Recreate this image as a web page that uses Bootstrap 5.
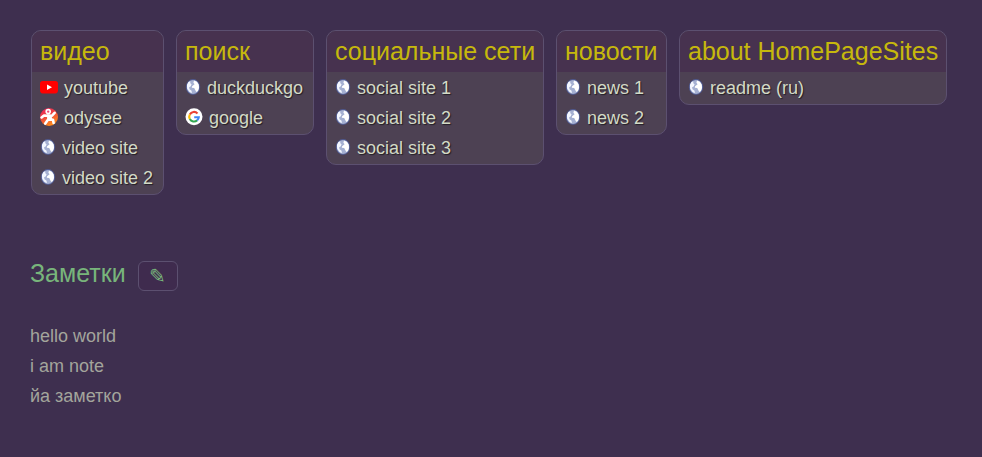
<!DOCTYPE html>
<html lang="ru">
<head>
<meta charset="utf-8">
<title>HomePageSites</title>
<link href="https://cdn.jsdelivr.net/npm/bootstrap@5.3.0/dist/css/bootstrap.min.css" rel="stylesheet">
<style>
body{background:#3e2f4f;font:18px/30px "Liberation Sans",Arial,sans-serif;min-height:457px}
main{padding:30px 30px 0 31px}
.groups{gap:12px;height:231px}
.site-group{border:1px solid #5c5070;border-radius:10px;background:#4d4153;overflow:hidden;padding-bottom:2px}
.site-group h2{height:41px;background:#47324f;color:#c6b80c;font-size:25px;line-height:40px;padding-left:8px;white-space:nowrap}
.site-link{height:30px;padding:2px 0 0 8px;color:#d3dac6;text-shadow:1px 1px 1px rgba(0,0,0,.55);white-space:nowrap;line-height:28px}
.site-link svg{margin:-2px 6px 0 0;flex:none}
.w1{width:133px}.w2{width:138px}.w3{width:218px}.w4{width:111px}.w5{width:268px}
.notes{margin-left:-1px}
.notes h2{color:#78b57b;font-size:25px;line-height:30px;width:96px;margin:-6px 12px 0 0}
.edit-note{width:40px;height:30px;border:1px solid #5c5070;border-radius:6px;background:#3f2b4e;color:#78b57b;font-size:20px;line-height:26px;padding:0 2px 0 0}
.note-text{margin-top:30px;color:#a3a59c}
</style>
<script src="https://cdn.jsdelivr.net/npm/bootstrap@5.3.0/dist/js/bootstrap.bundle.min.js"></script>
</head>
<body>
<svg width="0" height="0" class="position-absolute" aria-hidden="true"><defs>
<symbol id="globe" viewBox="0 0 16 16"><ellipse cx="8" cy="8" rx="7.2" ry="7.9" fill="#5163a6" opacity=".75"/><ellipse cx="8" cy="8" rx="6.2" ry="6.9" fill="#a5b0d2"/><path d="M1.9 6 3.4 3.1 5.2 2.3 5.3 4.2 6.6 5.2 5.6 7.4 4.1 8.3 4.5 10.2 6.6 11.8 6.8 14.3 4.3 12.8 2.2 9.8Z" fill="#f3f6ff"/><path d="M9 1.5 11.9 2.8 13.8 5.8 14 9 12.9 12 11.3 13 10.2 10.9 9.2 9.1 6.8 8.7 7.1 7.3 9.6 5.3 8.4 3.7Z" fill="#fff"/></symbol>
</defs></svg>
<main>
<div class="groups d-flex align-items-start">
<section class="site-group w1"><h2 class="m-0 fw-normal">видео</h2>
<a class="site-link d-flex align-items-center text-decoration-none"><svg width="18" height="18" viewBox="0 0 18 18"><rect y="3" width="18" height="12.4" rx="2.8" fill="#f00"/><path d="m7 6.4 5 2.8-5 2.8Z" fill="#fff"/></svg>youtube</a>
<a class="site-link d-flex align-items-center text-decoration-none"><svg width="18" height="18" viewBox="0 0 18 18"><defs><linearGradient id="odysee" x1="0" y1="0" x2=".5" y2="1"><stop stop-color="#e81e62"/><stop offset=".5" stop-color="#ed453f"/><stop offset="1" stop-color="#ff8a1c"/></linearGradient></defs><circle cx="9" cy="9" r="9" fill="url(#odysee)"/><circle cx="8.2" cy="3.6" r="2" fill="#f24b78" stroke="#fff" stroke-width="1.6"/><path d="M14.6 4.8 12 7.7 9.3 8.2M1.6 9.4 4 7.5l5 .4M5.3 15.6l2.8-4L13 11.7l.6 3.2" fill="none" stroke="#fff" stroke-width="2.6" stroke-linecap="round" stroke-linejoin="round"/><path d="M7 6.5h4l1.8 5.7H7.2Z" fill="#fff"/></svg>odysee</a>
<a class="site-link d-flex align-items-center text-decoration-none"><svg width="16" height="16"><use href="#globe"/></svg>video site</a>
<a class="site-link d-flex align-items-center text-decoration-none"><svg width="16" height="16"><use href="#globe"/></svg>video site 2</a></section>
<section class="site-group w2"><h2 class="m-0 fw-normal">поиск</h2>
<a class="site-link d-flex align-items-center text-decoration-none"><svg width="16" height="16"><use href="#globe"/></svg>duckduckgo</a>
<a class="site-link d-flex align-items-center text-decoration-none"><svg width="18" height="18" viewBox="0 0 18 18"><circle cx="9" cy="8.7" r="8.5" fill="#fff"/><g fill="none" stroke-width="2.1" transform="translate(0 -.3)"><path d="M12.5 5.7A4.8 4.8 0 0 0 4.8 6.8" stroke="#ea4335"/><path d="M4.8 6.8a4.8 4.8 0 0 0 0 4.5" stroke="#fbbc05"/><path d="M4.8 11.3a4.8 4.8 0 0 0 7.3 1.4" stroke="#34a853"/><path d="M12.1 12.7a4.8 4.8 0 0 0 1.7-3.2H9.2" stroke="#4285f4"/></g></svg>google</a></section>
<section class="site-group w3"><h2 class="m-0 fw-normal">социальные сети</h2>
<a class="site-link d-flex align-items-center text-decoration-none"><svg width="16" height="16"><use href="#globe"/></svg>social site 1</a>
<a class="site-link d-flex align-items-center text-decoration-none"><svg width="16" height="16"><use href="#globe"/></svg>social site 2</a>
<a class="site-link d-flex align-items-center text-decoration-none"><svg width="16" height="16"><use href="#globe"/></svg>social site 3</a></section>
<section class="site-group w4"><h2 class="m-0 fw-normal">новости</h2>
<a class="site-link d-flex align-items-center text-decoration-none"><svg width="16" height="16"><use href="#globe"/></svg>news 1</a>
<a class="site-link d-flex align-items-center text-decoration-none"><svg width="16" height="16"><use href="#globe"/></svg>news 2</a></section>
<section class="site-group w5"><h2 class="m-0 fw-normal">about HomePageSites</h2>
<a class="site-link d-flex align-items-center text-decoration-none"><svg width="16" height="16"><use href="#globe"/></svg>readme (ru)</a></section>
</div>
<section class="notes"><div class="d-flex align-items-center"><h2 class="fw-normal">Заметки</h2><button class="edit-note" type="button" aria-label="Редактировать">✎</button></div>
<div class="note-text"><div>hello world</div><div>i am note</div><div>йа заметко</div></div></section>
</main>
</body>
</html>
